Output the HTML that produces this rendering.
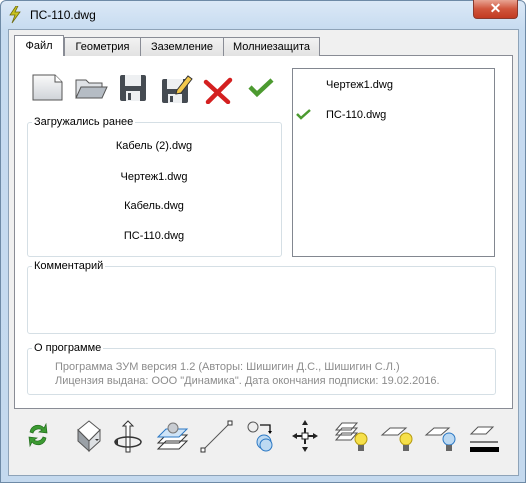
<!DOCTYPE html>
<html><head><meta charset="utf-8"><style>
*{margin:0;padding:0;box-sizing:border-box}
body{width:526px;height:483px;overflow:hidden;font-family:"Liberation Sans",sans-serif;font-size:11px;color:#000;background:#fff}
.a{position:absolute}
.win{left:0;top:0;width:526px;height:483px;background:linear-gradient(#dbe8f6,#c6dbf0 30px,#c4d9ee);border:1px solid #6e8aa6;border-radius:6px 6px 0 0}
.client{left:8px;top:29px;width:511px;height:447px;background:#f0f0f0;border:1px solid #8ea3b8}
.tab{top:37px;height:19px;border:1px solid #898c95;border-bottom:none;background:linear-gradient(#f2f2f2,#e2e2e2);text-align:center;line-height:18px}
.panel{left:14px;top:55px;width:499px;height:354px;background:#fff;border:1px solid #898c95}
.grp{border:1px solid #d5dfe5;border-radius:3px}
.gl{background:#fff;padding:0 2px}
.c{text-align:center;width:254px;left:27px}
</style></head><body>
<div class="a win"></div>
<svg class="a" style="left:8px;top:6px" width="14" height="18"><path d="M8 0 L2 9 L7 9 L4 17 L12 6 L7 6 L10 0Z" fill="#c9c31e" stroke="#6d6a10" stroke-width=".8"/></svg>
<div class="a" style="left:30px;top:8px;font-size:12px">ПС-110.dwg</div>
<div class="a" style="left:473px;top:0;width:45px;height:19px;border:1px solid #8a3a2e;border-top:none;border-radius:0 0 4px 4px;background:linear-gradient(#e8a493,#d0553c 50%,#c23a22)"></div>
<div class="a" style="left:473px;top:0;width:45px;height:19px;text-align:center;color:#fff;font-weight:bold;font-size:14px;line-height:17px">✕</div>
<div class="a client"></div>
<div class="a panel"></div>
<div class="a tab" style="left:64px;width:77px">Геометрия</div>
<div class="a tab" style="left:140px;width:84px">Заземление</div>
<div class="a tab" style="left:223px;width:97px">Молниезащита</div>
<div class="a tab" style="left:14px;top:35px;width:50px;height:21px;background:#fff;line-height:20px;z-index:2">Файл</div>
<svg class="a" style="left:30px;top:72px" width="250" height="32">
<defs><linearGradient id="g1" x1="0" y1="0" x2="0" y2="1"><stop offset="0" stop-color="#fafafa"/><stop offset="1" stop-color="#cfd3d8"/></linearGradient></defs>
<path d="M3 3 H25 L32 10 V28 H3Z" fill="url(#g1)" stroke="#555"/>
<path d="M25 3 V10 H32" fill="#fff" stroke="#555"/>
<path d="M46 8 H56 L59 11 H72 V26 H46Z" fill="#dfe2e6" stroke="#555"/>
<path d="M46 26 L51 15 H77 L72 26Z" fill="#b5bcc4" stroke="#555"/>
<rect x="90" y="3" width="26" height="26" rx="2" fill="#454b52"/><rect x="95" y="3" width="16" height="11" fill="#eef0f2"/><rect x="96" y="19" width="14" height="10" fill="#eef0f2"/><rect x="98" y="21" width="3" height="7" fill="#454b52"/>
<rect x="132" y="7" width="26" height="24" rx="2" fill="#454b52"/><rect x="137" y="7" width="16" height="10" fill="#eef0f2"/><rect x="138" y="22" width="14" height="9" fill="#eef0f2"/><rect x="140" y="24" width="3" height="6" fill="#454b52"/>
<path d="M147 18 L158 4 L162 7 L151 21 L146 22Z" fill="#f3c84b" stroke="#333"/>
<path d="M176 10 L198 30 M200 8 L178 30" stroke="#d42020" stroke-width="4.5" stroke-linecap="round"/>
<path d="M220 15 L227 22 L242 8" stroke="#4c9a30" stroke-width="4.5" fill="none"/>
</svg>
<div class="a grp" style="left:27px;top:122px;width:255px;height:135px"></div>
<div class="a gl" style="left:32px;top:116px">Загружались ранее</div>
<div class="a c" style="top:140px">Кабель (2).dwg</div>
<div class="a c" style="top:171px">Чертеж1.dwg</div>
<div class="a c" style="top:200px">Кабель.dwg</div>
<div class="a c" style="top:230px">ПС-110.dwg</div>
<div class="a" style="left:292px;top:68px;width:203px;height:189px;border:1px solid #828790"></div>
<div class="a" style="left:326px;top:79px">Чертеж1.dwg</div>
<svg class="a" style="left:296px;top:108px" width="16" height="12"><path d="M1 6 L5 10 L14 2" stroke="#4c9a30" stroke-width="2.5" fill="none"/></svg>
<div class="a" style="left:326px;top:109px">ПС-110.dwg</div>
<div class="a grp" style="left:27px;top:266px;width:469px;height:68px"></div>
<div class="a gl" style="left:32px;top:260px">Комментарий</div>
<div class="a grp" style="left:27px;top:348px;width:469px;height:47px"></div>
<div class="a gl" style="left:32px;top:342px">О программе</div>
<div class="a" style="left:55px;top:361px;color:#8c8c8c">Программа ЗУМ версия 1.2 (Авторы: Шишигин Д.С., Шишигин С.Л.)</div>
<div class="a" style="left:55px;top:375px;color:#8c8c8c">Лицензия выдана: ООО "Динамика". Дата окончания подписки: 19.02.2016.</div>
<svg class="a" style="left:20px;top:418px" width="480" height="36">
<path d="M10 14 A8 8 0 0 1 24 10 L26 6 L27 15 L19 14 L22 12 A6 6 0 0 0 13 15Z M26 20 A8 8 0 0 1 12 24 L10 28 L9 19 L17 20 L14 22 A6 6 0 0 0 23 19Z" fill="#3c9a32" stroke="#216b1b" stroke-width=".7"/>
<path d="M58 12 L69 3 L80 12 L69 23Z" fill="#fff" stroke="#555"/><path d="M58 12 V23 L69 33 V23Z" fill="#9aa0a6" stroke="#555"/><path d="M80 12 V23 L69 33 V23Z" fill="#dde0e3" stroke="#555"/>
<path d="M75 21 h4 l-2 2z" fill="#333"/>
<path d="M103 8 L108 3 L113 8 H110 V34 H106 V8Z" fill="#fff" stroke="#333"/>
<ellipse cx="108" cy="24" rx="13" ry="5" fill="none" stroke="#333" stroke-width="1.5"/><path d="M95 24 l3 -3 v6z" fill="#333"/>
<path d="M138 31 L146 23 H167 L159 31Z M138 25 L146 17 H167 L159 25Z" fill="#fff" stroke="#333"/>
<path d="M138 19 L146 11 H167 L159 19Z" fill="#cfe4f7" stroke="#2b78c4"/><circle cx="153" cy="10" r="5" fill="#c8ccd2" stroke="#777"/>
<path d="M183 32 L210 5" stroke="#555"/><rect x="181" y="30" width="4" height="4" fill="#fff" stroke="#333"/><rect x="208" y="3" width="4" height="4" fill="#fff" stroke="#333"/>
<circle cx="233" cy="9" r="5" fill="#eee" stroke="#555"/><path d="M240 7 H250 V14" stroke="#111" fill="none" stroke-width="1.3"/><path d="M248 13 h4 l-2 3z"/>
<circle cx="244" cy="24" r="7" fill="#bcd9f2" stroke="#2b78c4"/><circle cx="246" cy="27" r="6" fill="#bcd9f2" stroke="#2b78c4"/>
<path d="M285 10 v16 M277 18 h16" stroke="#222" stroke-width="2"/><rect x="282" y="15" width="6" height="6" fill="#fff" stroke="#222"/>
<path d="M285 2 l-3 5 h6z M285 34 l-3 -5 h6z M272 18 l5 -3 v6z M298 18 l-5 -3 v6z" fill="#222"/>
<path d="M316 12 L322 5 H337 L331 12Z M316 17 L322 10 H337 L331 17Z M316 22 L322 15 H337 L331 22Z" fill="#fff" stroke="#555"/>
<circle cx="341" cy="21" r="6" fill="#f6e04a" stroke="#b59a10"/><rect x="338" y="27" width="6" height="6" fill="#666"/>
<path d="M362 17 L370 10 H386 L378 17Z" fill="#fff" stroke="#555"/><circle cx="386" cy="21" r="6" fill="#f6e04a" stroke="#b59a10"/><rect x="383" y="27" width="6" height="6" fill="#666"/>
<path d="M406 17 L414 10 H429 L421 17Z" fill="#fff" stroke="#555"/><circle cx="429" cy="21" r="6" fill="#bcd9f2" stroke="#2b78c4"/><rect x="426" y="27" width="6" height="6" fill="#666"/>
<path d="M451 16 L458 9 H473 L466 16Z" fill="#fff" stroke="#555"/><path d="M450 24 H478" stroke="#000"/><rect x="450" y="29" width="29" height="5" fill="#000"/>
</svg>
</body></html>
